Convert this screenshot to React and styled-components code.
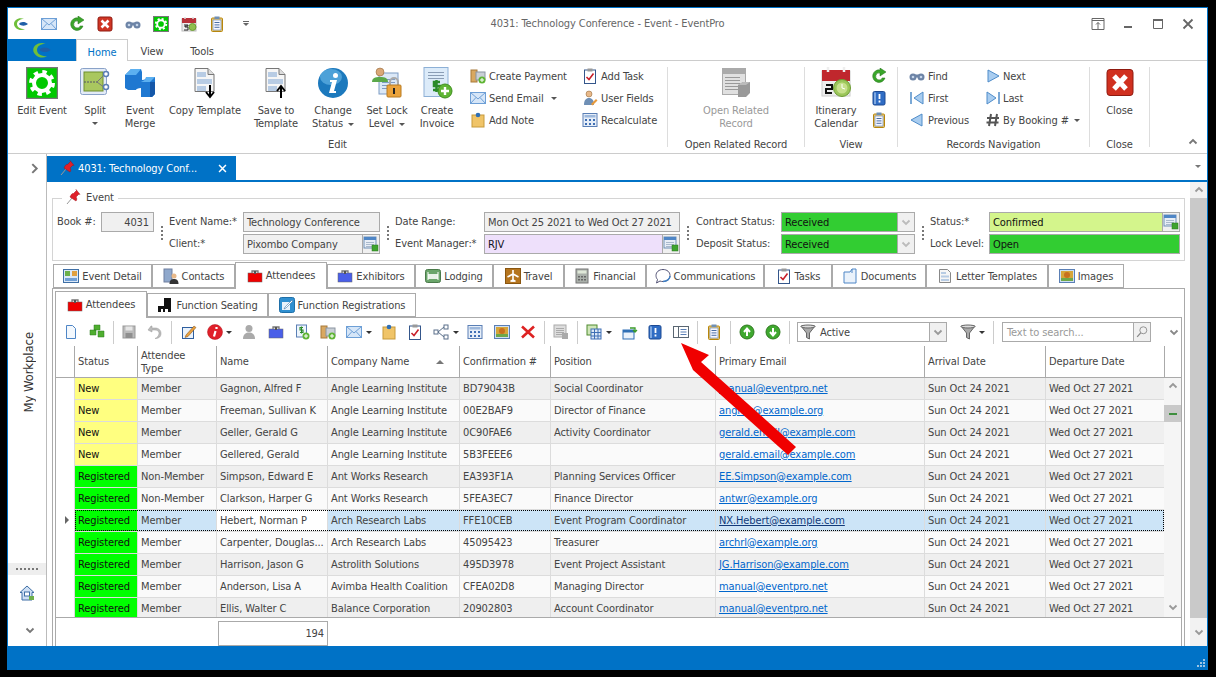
import React from 'react';
import styled, { createGlobalStyle } from 'styled-components';

const Global = createGlobalStyle`
  html, body { margin: 0; padding: 0; background: #000; overflow: hidden; }
  body { font-family: "DejaVu Sans Condensed", "DejaVu Sans", "Liberation Sans", sans-serif; font-stretch: condensed; font-size: 11px; letter-spacing: -0.1px; color: #444; }
  * { box-sizing: border-box; }
`;

const BLUE = '#0072c6';
const Page = styled.div`position: relative; width: 1216px; height: 677px; padding: 7px 8px 7px 7px; background: #000;`;
const Win = styled.div`width: 1201px; height: 663px; background: #fff; border: 1px solid ${BLUE}; display: flex; flex-direction: column;`;
const Svg = styled.svg`display: block; flex: none;`;
const Overlay = styled.svg`position: absolute; left: 0; top: 0; pointer-events: none;`;

const TitleBar = styled.div`height: 31px; flex: none; display: grid; grid-template-columns: 1fr auto 1fr; align-items: center;`;
const Qat = styled.div`display: flex; align-items: center; gap: 12px; padding-left: 5px;`;
const Title = styled.div`color: #666;`;
const WinBtns = styled.div`display: flex; justify-content: flex-end; align-items: center; gap: 16px; padding-right: 12px;`;
const QatCaret = styled.span`margin-left: 6px; display: flex; flex-direction: column; gap: 1px; align-items: center;
  &::before { content: ''; width: 6px; height: 1px; background: #666; }
  &::after { content: ''; border: 3px solid transparent; border-top-color: #666; border-bottom: 0; }`;

const RTabs = styled.div`height: 22px; flex: none; display: flex; border-bottom: 1px solid #ccc;`;
const LogoTab = styled.div`width: 68px; height: 22px; background: ${BLUE}; display: flex; align-items: center; justify-content: center;`;
const RTab = styled.div`height: ${p => p.$on ? 22 : 21}px; width: ${p => p.$w}px; display: flex; align-items: center; justify-content: center; font-size: 11px; padding-top: 3px;
  color: ${p => p.$on ? BLUE : '#444'}; ${p => p.$on && 'background:#fff; border: 1px solid #ccc; border-bottom: 0;'}`;

const Ribbon = styled.div`height: 93px; flex: none; display: flex; padding: 6px 0 0; border-bottom: 1px solid #ccc;`;
const RGroup = styled.div`width: ${p => p.$w}px; height: 80px; flex: none; display: flex; flex-direction: column; border-right: ${p => p.$noline ? 0 : '1px solid #ddd'};`;
const RContent = styled.div`height: 70px; flex: none; display: flex; padding-left: ${p => p.$pl || 0}px;`;
const RLabel = styled.div`height: 10px; line-height: 16px; text-align: center; color: #444; white-space: nowrap;`;
const Big = styled.div`width: ${p => p.$w}px; flex: none; display: flex; flex-direction: column; align-items: center; color: ${p => p.$off ? '#999' : '#444'}; line-height: 13px; text-align: center;`;
const BigIcon = styled.div`height: 37px; flex: none;`;
const BigText = styled.div`white-space: nowrap;`;
const SmallCol = styled.div`width: ${p => p.$w ? p.$w + 'px' : 'auto'}; flex: none; margin-top: -2px; margin-left: ${p => p.$ml || 0}px; display: flex; flex-direction: column;`;
const SmallRow = styled.div`height: 22px; display: flex; align-items: center; gap: ${p => p.$gap ?? 3}px; white-space: nowrap;`;
const Caret = styled.span`display: inline-block; flex: none; width: 0; height: 0; border: 3px solid transparent; border-top: 3px solid ${p => p.$c || '#555'}; border-bottom: 0; margin-left: ${p => p.$ml || 0}px; vertical-align: middle;`;
const CaretLine = styled.div`height: 13px; display: flex; align-items: center; justify-content: center;`;
const Collapse = styled.div`margin-left: auto; align-self: flex-end; padding: 0 9px 6px 0;`;

const Body = styled.div`flex: 1; min-height: 0; display: flex;`;
const Side = styled.div`width: 39px; flex: none; border-right: 1px solid #bbb; display: flex; flex-direction: column;`;
const SideTop = styled.div`height: 28px; flex: none; display: flex; align-items: center; justify-content: flex-end; padding-right: 6px;`;
const SideMid = styled.div`flex: 1; min-height: 0; display: flex; align-items: center; justify-content: center;`;
const Vertical = styled.div`writing-mode: vertical-rl; transform: rotate(180deg); font-size: 13px; color: #333; margin-left: 2px;`;
const Splitter = styled.div`height: 12px; flex: none; background: #eee; display: flex; align-items: center; justify-content: center;
  &::after { content: ''; width: 22px; height: 2px; background: repeating-linear-gradient(90deg, #777 0 2px, transparent 2px 4px); }`;
const SideHome = styled.div`height: 36px; flex: none; display: flex; align-items: center; justify-content: center;`;
const SideEnd = styled.div`height: 35px; flex: none; display: flex; align-items: flex-start; justify-content: center; padding-top: 14px; padding-left: 5px;`;

const Doc = styled.div`flex: 1; min-width: 0; display: flex; flex-direction: column;`;
const DocTabs = styled.div`height: 28px; flex: none; border-bottom: 2px solid ${BLUE}; display: flex; align-items: flex-end; justify-content: space-between;`;
const DocTab = styled.div`width: 189px; height: 24px; background: ${BLUE}; color: #fff; display: flex; align-items: center; padding: 0 8px 0 13px; gap: 2px;`;
const DocTabText = styled.span`flex: 1; white-space: nowrap;`;
const DocMenu = styled.div`padding: 0 6px 8px 0;`;
const DocBody = styled.div`flex: 1; min-height: 0; display: flex;`;
const Main = styled.div`flex: 1; min-width: 0; padding: 16px 5px 0; display: flex; flex-direction: column;`;
const VScroll = styled.div`width: 17px; flex: none; display: flex; flex-direction: column; background: #f2f2f2;`;
const ScrollBtn = styled.div`height: ${p => p.$h}px; flex: none; display: flex; align-items: center; justify-content: center;`;
const ScrollTrack = styled.div`flex: 1; background: #c9c9c9;`;

const EventBox = styled.div`height: 63px; flex: none; border: 1px solid #d4d4d4;`;
const Legend = styled.div`width: fit-content; margin: -11px 0 0 9px; padding: 0 4px; height: 18px; display: flex; align-items: center; gap: 4px; background: #fff; font-size: 11px;`;
const Form = styled.div`margin: 6px 0 0 4px; display: grid; grid-auto-flow: column; grid-template-rows: 20px 20px; row-gap: 2px;
  grid-template-columns: 44px 53px 15px 74px 137px 15px 89px 196px 16px 85px 134px 15px 59px 191px;`;
const FLabel = styled.div`line-height: 20px; white-space: nowrap; color: #444;`;
const Empty = styled.div``;
const Field = styled.div`height: 20px; border: 1px solid #aaa; background: ${p => p.$bg || '#f0f0f0'}; color: ${p => p.$c || '#444'}; display: flex; align-items: center; justify-content: ${p => p.$right ? 'flex-end' : 'space-between'}; padding-left: 3px; padding-right: ${p => p.$right ? 4 : 0}px; white-space: nowrap; overflow: hidden;`;
const FieldBtn = styled.div`width: 17px; height: 18px; flex: none; background: #f0f0f0; border-left: 1px solid #aaa; display: flex; align-items: center; justify-content: center;`;
const GripCell = styled.div`grid-row: 1 / span 2; display: flex; align-items: center; justify-content: flex-start; padding-left: 7px;
  &::after { content: ''; width: 2px; height: 14px; background: repeating-linear-gradient(180deg, #777 0 2px, transparent 2px 4px); }`;

const TabRow = styled.div`height: 26px; flex: none; margin-top: ${p => p.$mt || 0}px; padding-left: ${p => p.$pl || 0}px; display: flex; align-items: flex-end; position: relative; z-index: 1;`;
const Tab = styled.div`width: ${p => p.$w}px; height: ${p => p.$on ? 27 : p.$h}px; flex: none; margin-bottom: ${p => p.$on ? -1 : 0}px; background: #fff; border: 1px solid #aaa; border-bottom: ${p => p.$on ? 0 : '1px solid #aaa'}; display: flex; align-items: center; justify-content: center; gap: 3px; padding-bottom: ${p => p.$on ? 1 : 0}px; white-space: nowrap; color: #444;`;
const Panel = styled.div`flex: 1; min-height: 0; border: 1px solid #aaa; border-bottom: 0; padding: 2px 2px 0; display: flex; flex-direction: column;`;
const Inner = styled.div`flex: 1; min-height: 0; border: 1px solid #aaa; border-bottom: 0; display: flex; flex-direction: column;`;

const Toolbar = styled.div`height: 28px; flex: none; display: flex; align-items: center; padding-left: 2px;`;
const Tool = styled.div`width: ${p => p.$w}px; margin-left: ${p => p.$ml || 0}px; height: 24px; flex: none; display: flex; align-items: center; justify-content: center; gap: 3px;`;
const TSep = styled.div`width: ${p => p.$w || 6}px; height: 23px; flex: none; display: flex; justify-content: center; &::after { content: ''; width: 1px; background: #ccc; }`;
const Combo = styled.div`width: 150px; height: 20px; margin-left: 5px; flex: none; border: 1px solid #aaa; display: flex; align-items: center; padding-left: 2px; gap: 4px;`;
const ComboText = styled.span`flex: 1;`;
const ComboBtn = styled.div`width: 17px; height: 18px; background: #f0f0f0; border-left: 1px solid #aaa; display: flex; align-items: center; justify-content: center;`;
const Search = styled.div`width: 149px; height: 20px; margin-left: 6px; flex: none; border: 1px solid #aaa; display: flex; align-items: center; padding-left: 4px; color: #999;`;
const ToolEnd = styled.div`margin-left: auto; padding-right: 2px;`;

const COLS = '18px 63px 79px 111px 132px 91px 165px 209px 121px 119px';
const Head = styled.div`height: 32px; flex: none; display: grid; grid-template-columns: ${COLS} 1fr; border-bottom: 1px solid #aaa;`;
const HCell = styled.div`border-left: ${p => p.$first ? 0 : '1px solid #aaa'}; padding: 0 3px; display: flex; align-items: center; justify-content: space-between; line-height: 13px; color: #444; position: relative;`;
const SortUp = styled.span`border: 4px solid transparent; border-bottom: 4px solid #777; border-top: 0; margin-right: 12px;`;
const GridBody = styled.div`height: 239px; flex: none; display: flex; overflow: hidden;`;
const Rows = styled.div`width: 1108px; flex: none;`;
const Row = styled.div`position: relative; height: 22px; display: grid; grid-template-columns: ${COLS};
  ${p => p.$sel && `&::after { content: ''; position: absolute; left: 19px; right: 0; top: 0; bottom: 1px; border: 1px dotted #000; pointer-events: none; }`}`;
const Cell = styled.div`background: ${p => p.$bg}; color: ${p => p.$c || '#444'}; border-left: 1px solid #dcdcdc; border-bottom: 1px solid #dcdcdc; padding: 0 3px; display: flex; align-items: center; white-space: nowrap; overflow: hidden; padding-bottom: 1px;`;
const Indicator = styled.div`background: #fff; display: flex; align-items: center; justify-content: flex-end; padding: 0 5px 2px 0;
  ${p => p.$on && `&::after { content: ''; border: 4px solid transparent; border-left: 4px solid #666; border-right: 0; }`}`;
const Mail = styled.span`color: ${p => p.$dark ? '#123a7a' : '#0066cc'}; text-decoration: underline;`;
const GridScroll = styled.div`flex: 1; background: #f5f5f5; display: flex; flex-direction: column;`;
const GsUp = styled.div`height: 27px; flex: none; display: flex; align-items: center; justify-content: center; padding-bottom: 12px;`;
const GsThumb = styled.div`height: 17px; flex: none; background: #c9c9c9; display: flex; align-items: center; justify-content: center; &::after { content: ''; width: 8px; height: 2px; background: #3f8f3f; }`;
const GsDown = styled.div`margin-top: auto; height: 20px; display: flex; align-items: center; justify-content: center;`;
const Foot = styled.div`flex: 1; border-top: 1px solid #aaa; padding: 3px 0 0 162px;`;
const Total = styled.div`width: 110px; height: 25px; border: 1px solid #aaa; display: flex; align-items: center; justify-content: flex-end; padding-right: 3px; color: #444;`;
const Status = styled.div`height: 23px; flex: none; background: ${BLUE}; display: flex; align-items: flex-end; justify-content: flex-end; padding: 0 1px 1px 0;`;

const Chev = ({ d = 'down', c = '#888', s = 10 }) => {
  const p = { down: 'M1.5 3.5L5 7l3.5-3.5', up: 'M1.5 6.5L5 3l3.5 3.5', right: 'M3 1L7 5l-4 4' }[d];
  return <Svg width={s} height={s} viewBox="0 0 10 10"><path d={p} fill="none" stroke={c} strokeWidth="1.8" /></Svg>;
};

const gear = (cx, cy, r) => (
  <g fill="none" stroke="#fff">
    <circle cx={cx} cy={cy} r={r * 1.37} strokeWidth={r * 0.5} strokeDasharray={`${r * 0.54} ${r * 0.536}`} />
    <circle cx={cx} cy={cy} r={r} strokeWidth={r * 0.5} />
  </g>
);
const lines = (x, y, w, n, c = '#8a9db5', st = 2) => Array.from({ length: n }, (_, i) => <path key={i} d={`M${x} ${y + i * st + .5}h${w}`} stroke={c} strokeWidth="1" />);
const brief = c => (<g><rect x="1" y="5" width="14" height="9" fill={c} stroke="#666" strokeWidth=".5" /><path d="M5 5V3h6v2" fill="none" stroke="#777" strokeWidth="1.3" /><rect x="7" y="3" width="2" height="3" fill="#555" /></g>);
const note = (<g><rect x="2" y="3" width="12" height="12" fill="#f0c468" stroke="#c79a3a" /><circle cx="8" cy="3" r="2.3" fill="#2f6fb5" /></g>);
const task = (<g><rect x="2.5" y="2" width="11" height="13.5" fill="#fff" stroke="#34568b" /><rect x="5.5" y="0.5" width="5" height="3" fill="#999" /><path d="M4.5 9l2.5 2.5 4.5-6" fill="none" stroke="#c8202a" strokeWidth="1.6" /></g>);
const clip = (<g><rect x="2.5" y="2" width="11" height="13.5" rx="1" fill="#e9c877" stroke="#b8860b" /><rect x="4" y="4" width="8" height="10" fill="#f7f7ff" stroke="#5a7fb0" strokeWidth=".6" />{lines(5.5, 6, 5, 3, '#4a6fa5', 2.4)}<rect x="5.5" y=".5" width="5" height="2.5" fill="#6f8fb5" /></g>);
const book = (<g><rect x="2" y="1.5" width="12" height="13.5" rx="1.5" fill="#2f6cc4" stroke="#1d4a94" /><rect x="3" y="2.5" width="2" height="11.5" fill="#7fa8e0" /><path d="M8.5 4v5M8.5 10.5v2" stroke="#fff" strokeWidth="1.8" /></g>);
const tri = (pts, f = '#a9cdf0') => <path d={pts} fill={f} stroke="#4f8cc9" strokeLinejoin="round" />;
const lookup = (<g><rect x="1" y="1" width="12" height="11" fill="#e8eef6" stroke="#6f8fb5" /><rect x="1" y="1" width="12" height="3" fill="#4f86c6" />{lines(3, 6, 8, 3, '#a9b9cc', 2)}<rect x="9" y="9" width="6" height="6" fill="#3fa32f" stroke="#2a7a1f" strokeWidth=".5" /></g>);
const updown = (c, up) => (<g><circle cx="8" cy="8" r="7" fill={c} stroke="#2f7a1f" /><path d={up ? 'M8 12V6M5 8l3-3.5L11 8' : 'M8 4v6M5 8l3 3.5L11 8'} fill="none" stroke="#fff" strokeWidth="2" /></g>);

const I = {
  logo: <g><path d="M1 8C1 4 6 1 11 3 7 3 4 5 4 8s3 5 8 5C7 16 1 12 1 8z" fill="#6fbf3a" /><path d="M6 8c1-2.5 6-3 9 0-3 2.500-7 2-9 0z" fill="#1f5fa8" /></g>,
  mail: <g><rect x=".5" y="2.500" width="15" height="11" fill="#d6e6f8" stroke="#6d9fd6" /><path d="M.5 2.500L8 9l7.500-6.500M.5 13.500L6 7.500m9.500 6L10 7.500" fill="none" stroke="#6d9fd6" /></g>,
  refresh: <path d="M14 10A6.300 6.300 0 1 1 9 1.900V0l6 4-6 4V5A3.500 3.500 0 1 0 11.300 10z" fill="#3aa62a" stroke="#1f6d14" strokeWidth=".5" />,
  redx: <g><rect x="1" y="1" width="14" height="14" rx="2" fill="#cf3524" stroke="#8f1a10" /><path d="M4.500 4.500l7 7m0-7l-7 7" stroke="#fff" strokeWidth="2.600" /></g>,
  binoc: <g fill="#6d84a6"><circle cx="4" cy="9" r="3.500" /><circle cx="12" cy="9" r="3.500" /><rect x="6" y="6.500" width="4" height="3" /><circle cx="4" cy="9" r="1.300" fill="#c5d5ea" /><circle cx="12" cy="9" r="1.300" fill="#c5d5ea" /></g>,
  gear: <g><rect x=".5" y=".5" width="15" height="15" fill="#00c800" stroke="#777" />{gear(8, 8, 3.800)}</g>,
  cal: <g><rect x="1" y="3" width="14" height="12" fill="#eee" stroke="#bbb" /><rect x="1" y="2" width="14" height="5" fill="#b8323a" /><path d="M4 1v2m8-2v2" stroke="#ddd" strokeWidth="1.500" /><path d="M3 9h4v1H4v1h3v3H3" fill="none" stroke="#222" strokeWidth="1" /><circle cx="11.500" cy="11" r="3.500" fill="#8fbf4f" stroke="#6d9d33" /></g>,
  clip,
  payment: <g><rect x="1" y="2" width="6" height="12" fill="#d9a860" stroke="#a87a3a" /><rect x="6" y="4" width="9" height="8" fill="#c9cfd6" stroke="#8a94a0" /><circle cx="12" cy="12" r="3.500" fill="#5fb534" /><path d="M12 10v4m-2-2h4" stroke="#fff" /></g>,
  note, task,
  user: <g><circle cx="7" cy="4" r="3" fill="#e8b98a" stroke="#8a5a2a" strokeWidth=".5" /><path d="M2 15c0-5 2-7 5-7s5 2 5 7z" fill="#6f8fb5" /><path d="M9 14l5-5 1.500 1.500-5 5z" fill="#e89a3c" /></g>,
  calc: <g><rect x="1" y="1.500" width="14" height="13" fill="#e6eef8" stroke="#5a7fb5" /><rect x="2.500" y="3" width="11" height="2.500" fill="#9db8dc" /><path d="M3 7h2v2H3zM7 7h2v2H7zM11 7h2v2h-2zM3 11h2v2H3zM7 11h2v2H7zM11 11h2v2h-2z" fill="#3f6fb5" /></g>,
  next: tri('M3 2l11 6-11 6z'),
  prev: tri('M13 2L2 8l11 6z'),
  first: <g><path d="M2 2v12" stroke="#4f8cc9" strokeWidth="1.500" />{tri('M14 2L5 8l9 6z')}</g>,
  last: <g><path d="M14 2v12" stroke="#4f8cc9" strokeWidth="1.500" />{tri('M2 2l9 6-9 6z')}</g>,
  hash: <path d="M6 2L4 14M12 2l-2 12M2 6h12M1.500 10.500h12" stroke="#555" strokeWidth="2" fill="none" />,
  book,
  lookup,
  pin: <g><path d="M1 15l5-6" stroke="#999" strokeWidth="1" /><path d="M4 8l6 4c1-1 1-3 0-4l3-3 1 .5L10 .5l.5 1-3 3C6 4 5 6 4 8z" fill="#e0202a" stroke="#a01018" strokeWidth=".5" /></g>,
  x: <path d="M3 3l10 10m0-10L3 13" stroke="#fff" strokeWidth="2.200" />,
  detail: <g><rect x=".5" y="1.500" width="15" height="13" fill="#dbe8f7" stroke="#3f6fa5" /><rect x="2" y="3" width="5" height="5" fill="#6cb04a" /><rect x="9" y="3" width="5" height="5" fill="#e0a040" /><rect x="2" y="10" width="12" height="3" fill="#6f9fd6" /></g>,
  contacts: <g><rect x="1" y="1" width="8" height="13" fill="#8fa8cc" stroke="#6f7f9f" /><circle cx="11" cy="8" r="2.500" fill="#e8b98a" /><path d="M6.500 16c0-4 2-5 4.500-5s4.500 1 4.500 5z" fill="#333" /></g>,
  red: brief('#f00000'),
  blue: brief('#4a5fe8'),
  lodging: <g><rect x=".5" y="1.500" width="15" height="13" rx="2" fill="#6aa56a" stroke="#4a7a4a" /><rect x="3" y="6" width="10" height="5" fill="#e8f2e8" /><path d="M3 4v8m10-8v8" stroke="#fff" /></g>,
  travel: <g><rect x=".5" y=".5" width="15" height="15" fill="#b5751f" stroke="#8a5610" /><path d="M8 2v12M2.500 9L8 6l5.500 3M5.500 13.500L8 12l2.500 1.500" fill="none" stroke="#fff" strokeWidth="1.600" /></g>,
  fin: <g><rect x="2" y="1" width="12" height="14" fill="#aab0aa" stroke="#777" /><rect x="3.500" y="2.500" width="9" height="3" fill="#dfe8d8" /><path d="M4 8h2v1.500H4zM7 8h2v1.500H7zM10 8h2v1.500h-2zM4 11h2v1.500H4zM7 11h2v1.500H7zM10 11h2v1.500h-2z" fill="#666" /></g>,
  comm: <g><path d="M8 1.500c4 0 7 2.500 7 6s-3 6-7 6c-1 0-2 0-3-.5L1.500 15l1-3.500C1.500 10.500 1 9 1 7.500c0-3.500 3-6 7-6z" fill="#fff" stroke="#557" /><path d="M15 8c0 3-3 5.500-7 5.500" fill="none" stroke="#3f7fc4" strokeWidth="1.500" /></g>,
  docs: <g><path d="M2 4h6l2-3h4v14H2z" fill="#eaf2fb" stroke="#4f86c6" /><path d="M10 1v4" stroke="#4f86c6" /></g>,
  letter: <g><path d="M2.500 1.500h8l3 3v10h-11z" fill="#f6f6f6" stroke="#888" /><path d="M4 4h5v2H4zM4 7.500h8v2H4zM4 11h8v2H4z" fill="#b8cce4" /></g>,
  image: <g><rect x=".5" y="1.500" width="15" height="13" fill="#cfe0f5" stroke="#5a7fb5" /><rect x="2" y="3" width="12" height="10" fill="#d6a63a" /><circle cx="8" cy="7" r="3" fill="#c8701f" /><rect x="2" y="10" width="12" height="3" fill="#6fa84a" /></g>,
  seat: <g fill="#111"><rect x="7" y="1" width="7" height="8" /><rect x="1" y="9" width="13" height="3" /><rect x="1" y="9" width="3" height="6" /><rect x="11" y="9" width="3" height="6" /><rect x="6" y="11" width="2" height="4" /></g>,
  reg: <g><rect x=".5" y=".5" width="15" height="15" rx="2" fill="#2f8fd0" stroke="#1f6fa8" /><path d="M3 13V5h8v8z" fill="#e8f2fb" /><path d="M6 10l7-7 1 1-7 7-2 1z" fill="#fff" stroke="#1f5f98" strokeWidth=".5" /></g>,
  newdoc: <path d="M3.500 1.500h6l3 3v10h-9z" fill="#f3f8fd" stroke="#4f86c6" />,
  cubes: <g fill="#4fae2f" stroke="#2a7a1f" strokeWidth=".5"><path d="M5 1h6v5H5zM1 6h6v5H1zM9 7h6v6H9z" /></g>,
  save: <g><rect x="2" y="2" width="12" height="12" fill="#bbb" stroke="#999" /><rect x="4.500" y="2.500" width="7" height="4" fill="#e6e6e6" /><rect x="4.500" y="9" width="7" height="5" fill="#8f8f8f" /></g>,
  undo: <path d="M4 2L1 6l4 2V6h3c3 0 4 1.500 4 3.500S10 14 8 14.500c4 0 6-2 6-5S12 4 8 4H5V2z" fill="#bbb" stroke="#999" strokeWidth=".5" />,
  edit: <g><rect x="1.500" y="3.500" width="11" height="11" fill="#eaf2fb" stroke="#2f5f9f" /><path d="M5 11l8-9 2 1.500-8 9-3 1z" fill="#e8a040" stroke="#7a4a10" strokeWidth=".5" /></g>,
  info: <g><circle cx="8" cy="8" r="7.500" fill="#e0202a" stroke="#b01018" strokeWidth=".5" /><path d="M9.500 3v2M8.500 7l-1.500 5.500" stroke="#fff" strokeWidth="2.200" /></g>,
  person: <g fill="#aaa"><circle cx="8" cy="4.500" r="3.500" /><path d="M2 15c0-5 3-6.500 6-6.500s6 1.500 6 6.500z" /></g>,
  invoice: <g><rect x="2.500" y="1" width="10" height="12" fill="#eef5fc" stroke="#5a7fb5" /><path d="M9 3.500H6v2.500h3v2.500H6M7.500 2.500v7" fill="none" stroke="#2a8a2a" strokeWidth="1.100" /><circle cx="12" cy="12" r="3.500" fill="#5fb534" /><path d="M12 10v4m-2-2h4" stroke="#fff" /></g>,
  diagram: <g fill="#fff" stroke="#5a6f8a"><rect x="1" y="6" width="4" height="4" /><rect x="11" y="1" width="4" height="4" /><rect x="11" y="11" width="4" height="4" /><path d="M5 8l6-5M5 8l6 5" fill="none" /></g>,
  redX: <path d="M2 2.500l12 11m0-11l-12 11" stroke="#d22" strokeWidth="2.600" />,
  record: <g><rect x="1" y="1" width="12" height="12" fill="#ddd" stroke="#aaa" />{lines(3, 4, 8, 4, '#aaa', 2)}<rect x="9" y="9" width="6" height="6" fill="#aaa" /></g>,
  cols: <g><rect x="1" y="1" width="10" height="10" fill="#cfe6b8" stroke="#4f8a2f" /><rect x="5" y="5" width="10" height="10" fill="#dbe8f7" stroke="#3f6fb5" /><path d="M5 8.500h10M5 12h10M8.500 5v10M12 5v10" stroke="#3f6fb5" /></g>,
  restore: <g><rect x="1" y="6" width="11" height="9" fill="#eaf2fb" stroke="#2f6fb5" /><rect x="1" y="6" width="11" height="2.500" fill="#2f6fb5" /><path d="M8 4h5v4m-2-2l2 2 2-2" fill="none" stroke="#3a9a2a" strokeWidth="1.300" /></g>,
  panel: <g fill="none" stroke="#5a6672"><rect x=".5" y="2.500" width="15" height="11" fill="#fff" /><path d="M5.500 2.500v11" /><path d="M7.500 5.500h6M7.500 8h6M7.500 10.500h6" stroke="#5a7fb5" /></g>,
  up: updown('#3fa82f', true),
  dn: updown('#3fa82f', false),
  funnel: <g><path d="M1 2h14L9.500 9v6l-3-1.500V9z" fill="#aaa" stroke="#666" /><ellipse cx="8" cy="2.500" rx="7" ry="1.500" fill="#ddd" stroke="#666" /></g>,
  lens: <g fill="none" stroke="#888"><circle cx="9.500" cy="6" r="4" /><path d="M6.500 9l-4 4.500" strokeWidth="1.500" /></g>,
  home: <g><path d="M8 1L1 7.500h2V15h10V7.500h2z" fill="#cfe0f5" stroke="#3f6fa5" /><rect x="5.500" y="7" width="5" height="4" fill="#fff" stroke="#3f6fa5" /><rect x="10" y="11" width="5" height="4" fill="#6fb04a" /></g>,
};
const Ic = ({ n, s = 16, w }) => <Svg width={w || s} height={s} viewBox="0 0 16 16">{I[n]}</Svg>;

const B = {
  gear: <g><rect x=".5" y=".5" width="31" height="31" fill="#00c800" stroke="#777" strokeWidth="1.500" />{gear(16, 16, 8)}</g>,
  split: <g><rect x="1.500" y="1.500" width="26" height="26" rx="2" fill="#e3ebf7" stroke="#8aa2c8" /><rect x="5" y="5" width="19" height="19" fill="#a9c75f" stroke="#6f8f2e" /><path d="M5 15h14" stroke="#556" strokeDasharray="2 1" /><path d="M18 15l8-8M18 15l8 6" stroke="#777" /><circle cx="27" cy="7" r="2.500" fill="#fff" stroke="#5b7fb5" strokeWidth="1.500" /><circle cx="27" cy="20" r="2.500" fill="#fff" stroke="#5b7fb5" strokeWidth="1.500" /></g>,
  merge: <g><path d="M1 8L7 2h10l1 3v8c3 0 4-1 4-3h9v17l-3 3H17v-2-7c-3 0-5 1-5 2H4l-3-2z" fill="#1f78d1" /><path d="M1 8L7 2h10l-5 6zM17 15c2-1 5-2 5-5h9l-5 5z" fill="#5cb0f0" /><path d="M26 15h5v12l-3 3h-2z" fill="#1557a8" /></g>,
  copyT: <g><path d="M6 1.500h13l6 6v17H6z" fill="#f6f6f6" stroke="#777" /><path d="M19 1.500v6h6" fill="#ddd" stroke="#777" /><path d="M8 5h9v5H8zM8 12h15v5H8zM8 19h9v5H8z" fill="#b8cce4" /><path d="M21 18v11M17 25l4 5 4-5" fill="none" stroke="#000" strokeWidth="2" /></g>,
  saveT: <g><path d="M6 1.500h13l6 6v17H6z" fill="#f6f6f6" stroke="#777" /><path d="M19 1.500v6h6" fill="#ddd" stroke="#777" /><path d="M8 5h9v5H8zM8 12h15v5H8zM8 19h9v5H8z" fill="#b8cce4" /><path d="M21 31V19M17 24l4-5 4 5" fill="none" stroke="#000" strokeWidth="2" /></g>,
  status: <g><circle cx="16" cy="16" r="15" fill="#1c79bd" /><ellipse cx="14" cy="10" rx="11" ry="8" fill="#63b2e4" opacity=".7" /><path d="M18.500 6a2.500 2.500 0 1 1 0 5 2.500 2.500 0 0 1 0-5zM13 13h7l-3 11h2v2h-7l3-11h-2z" fill="#fff" /></g>,
  lock: <g><rect x="8" y="6" width="19" height="21" fill="#dbe8f7" stroke="#7d9bc4" />{lines(11, 12, 13, 4, '#7d9bc4', 3)}<circle cx="9" cy="5" r="4" fill="#d9a878" stroke="#8a5a2a" strokeWidth=".5" /><path d="M1 15c0-4 3-5 8-5s8 1 8 5z" fill="#5aa84a" /><path d="M19 19v-4a4 4 0 0 1 8 0v4" stroke="#aaa" strokeWidth="2" fill="none" /><rect x="16" y="18" width="14" height="12" rx="1" fill="#eba33c" stroke="#b87a20" /><rect x="22" y="21" width="2" height="6" fill="#222" /></g>,
  invoice: <g><rect x="3" y="0.500" width="24" height="29" fill="#dcebf9" stroke="#8db0d6" />{lines(7, 5, 16, 3, '#8a9db5', 3)}<path d="M19 15h-6v4h6v4h-7M15.500 13v12" fill="none" stroke="#2a8a2a" strokeWidth="2.500" /><circle cx="24" cy="24" r="7" fill="#5fb534" stroke="#3f8f1f" /><path d="M24 20v8m-4-4h8" stroke="#fff" strokeWidth="2.400" /></g>,
  record: <g><rect x="2.500" y="1.500" width="23" height="26" fill="#e0e0e0" stroke="#aaa" /><rect x="3" y="2" width="22" height="5" fill="#aaa" />{lines(5, 10, 15, 5, '#999', 3)}<path d="M18 18l5-3h7v11l-4 4h-8z" fill="#999" /><path d="M18 18l5-3h7l-4 3z" fill="#bbb" /></g>,
  calendar: <g><rect x="2" y="4" width="28" height="25" fill="#eee" stroke="#ccc" /><rect x="2" y="3" width="28" height="11" fill="#c0272d" /><path d="M8 0v5m16-5v5" stroke="#eee" strokeWidth="2.500" /><path d="M6 18h6v4H6v4h6" fill="none" stroke="#111" strokeWidth="2" /><circle cx="22" cy="21" r="8.500" fill="#9cc65a" stroke="#6d9d33" /><circle cx="22" cy="21" r="5.500" fill="#c7e08c" /><path d="M22 17v4l3 1" fill="none" stroke="#fff" /></g>,
  close: <g><rect x="3" y="2.500" width="26" height="26" rx="3" fill="#d0301f" stroke="#8f1a10" /><path d="M10 9l12 13m0-13L10 22" stroke="#fff" strokeWidth="5" /></g>,
};
const BI = ({ n }) => <Svg width="32" height="32" viewBox="0 0 32 32">{B[n]}</Svg>;

const WinPin = () => <Svg width="14" height="14" viewBox="0 0 14 14"><path d="M1 1.500h12v11H1zM1 3.500h12M7 12V5.500M5 7.500l2-2 2 2" fill="none" stroke="#666" /></Svg>;
const WinMin = () => <Svg width="14" height="14" viewBox="0 0 14 14"><path d="M3 10h8" stroke="#666" strokeWidth="2" /></Svg>;
const WinMax = () => <Svg width="14" height="14" viewBox="0 0 14 14"><path d="M2.500 2.500h9v9h-9z" fill="none" stroke="#666" /><path d="M2 3h10" stroke="#666" strokeWidth="2" /></Svg>;
const WinX = () => <Svg width="14" height="14" viewBox="0 0 14 14"><path d="M2.500 2.500l9 9m0-9l-9 9" stroke="#666" strokeWidth="1.800" /></Svg>;

const mainTabs = [
  ['Event Detail', 'detail', 99], ['Contacts', 'contacts', 83], ['Attendees', 'red', 92, true], ['Exhibitors', 'blue', 88], ['Lodging', 'lodging', 78], ['Travel', 'travel', 71], ['Financial', 'fin', 82], ['Communications', 'comm', 118], ['Tasks', 'task', 68], ['Documents', 'docs', 94], ['Letter Templates', 'letter', 122], ['Images', 'image', 76],
];
const subTabs = [['Attendees', 'red', 92, true], ['Function Seating', 'seat', 121], ['Function Registrations', 'reg', 148]];

const tools = [
  ['newdoc', 26], ['cubes', 26], 0, ['save', 26], ['undo', 26], 7, ['edit', 28], ['info', 32, 1], ['person', 28], ['blue', 26], ['invoice', 26], ['payment', 26], ['mail', 35, 1, 18], ['note', 26], ['task', 26], ['diagram', 34, 1, 18], ['calc', 26], ['image', 27], ['redX', 26], 0, ['record', 27], 0, ['cols', 37, 1, 18], ['restore', 25], ['book', 26], ['panel', 26], 0, ['clip', 27], 0, ['up', 27], ['dn', 26], 0,
];
const people = [
  ['New', 'Member', 'Gagnon, Alfred F', 'Angle Learning Institute', 'BD79043B', 'Social Coordinator', 'manual@eventpro.net'],
  ['New', 'Member', 'Freeman, Sullivan K', 'Angle Learning Institute', '00E2BAF9', 'Director of Finance', 'anglelr@example.org'],
  ['New', 'Member', 'Geller, Gerald G', 'Angle Learning Institute', '0C90FAE6', 'Activity Coordinator', 'gerald.email@example.com'],
  ['New', 'Member', 'Gellered, Gerald', 'Angle Learning Institute', '5B3FEEE6', '', 'gerald.email@example.com'],
  ['Registered', 'Non-Member', 'Simpson, Edward E', 'Ant Works Research', 'EA393F1A', 'Planning Services Officer', 'EE.Simpson@example.com'],
  ['Registered', 'Non-Member', 'Clarkson, Harper G', 'Ant Works Research', '5FEA3EC7', 'Finance Director', 'antwr@example.org'],
  ['Registered', 'Member', 'Hebert, Norman P', 'Arch Research Labs', 'FFE10CEB', 'Event Program Coordinator', 'NX.Hebert@example.com'],
  ['Registered', 'Member', 'Carpenter, Douglas...', 'Arch Research Labs', '45095423', 'Treasurer', 'archrl@example.org'],
  ['Registered', 'Member', 'Harrison, Jason G', 'Astrolith Solutions', '495D3978', 'Event Project Assistant', 'JG.Harrison@example.com'],
  ['Registered', 'Member', 'Anderson, Lisa A', 'Avimba Health Coalition', 'CFEA02D8', 'Managing Director', 'manual@eventpro.net'],
  ['Registered', 'Member', 'Ellis, Walter C', 'Balance Corporation', '20902803', 'Account Coordinator', 'manual@eventpro.net'],
];
const SEL = 6;
const GREEN = '#32cd32';

const BigBtn = ({ icon, w, off, children }) => (
  <Big $w={w} $off={off}><BigIcon><BI n={icon} /></BigIcon><BigText>{children}</BigText></Big>
);

export default function App() {
  return (
    <Page>
      <Global />
      <Win>
        <TitleBar>
          <Qat>
            {['logo', 'mail', 'refresh', 'redx', 'binoc', 'gear', 'cal', 'clip'].map(n => <Ic key={n} n={n} />)}
            <QatCaret />
          </Qat>
          <Title>4031: Technology Conference - Event - EventPro</Title>
          <WinBtns><WinPin /><WinMin /><WinMax /><WinX /></WinBtns>
        </TitleBar>
        <RTabs>
          <LogoTab><Ic n="logo" s={20} /></LogoTab>
          <RTab $on $w={52}>Home</RTab>
          <RTab $w={48}>View</RTab>
          <RTab $w={52}>Tools</RTab>
        </RTabs>
        <Ribbon>
          <RGroup $w={660}>
            <RContent $pl={4}>
              <BigBtn icon="gear" w={60}>Edit Event</BigBtn>
              <Big $w={46}><BigIcon><BI n="split" /></BigIcon><BigText>Split</BigText><CaretLine><Caret /></CaretLine></Big>
              <BigBtn icon="merge" w={44}>Event<br />Merge</BigBtn>
              <BigBtn icon="copyT" w={86}>Copy Template</BigBtn>
              <BigBtn icon="saveT" w={56}>Save to<br />Template</BigBtn>
              <BigBtn icon="status" w={58}>Change<br />Status <Caret $ml={2} /></BigBtn>
              <BigBtn icon="lock" w={50}>Set Lock<br />Level <Caret $ml={2} /></BigBtn>
              <BigBtn icon="invoice" w={50}>Create<br />Invoice</BigBtn>
              <SmallCol $w={112} $ml={8}>
                <SmallRow><Ic n="payment" />Create Payment</SmallRow>
                <SmallRow><Ic n="mail" />Send Email<Caret $ml={4} /></SmallRow>
                <SmallRow><Ic n="note" />Add Note</SmallRow>
              </SmallCol>
              <SmallCol>
                <SmallRow><Ic n="task" />Add Task</SmallRow>
                <SmallRow><Ic n="user" />User Fields</SmallRow>
                <SmallRow><Ic n="calc" />Recalculate</SmallRow>
              </SmallCol>
            </RContent>
            <RLabel>Edit</RLabel>
          </RGroup>
          <RGroup $w={137}>
            <RContent><BigBtn icon="record" w={136} off>Open Related<br />Record</BigBtn></RContent>
            <RLabel>Open Related Record</RLabel>
          </RGroup>
          <RGroup $w={93}>
            <RContent>
              <BigBtn icon="calendar" w={62}>Itinerary<br />Calendar</BigBtn>
              <SmallCol $ml={4}>
                <SmallRow><Ic n="refresh" /></SmallRow>
                <SmallRow><Ic n="book" /></SmallRow>
                <SmallRow><Ic n="clip" /></SmallRow>
              </SmallCol>
            </RContent>
            <RLabel>View</RLabel>
          </RGroup>
          <RGroup $w={192}>
            <RContent $pl={11}>
              <SmallCol $w={76}>
                <SmallRow><Ic n="binoc" />Find</SmallRow>
                <SmallRow><Ic n="first" />First</SmallRow>
                <SmallRow><Ic n="prev" />Previous</SmallRow>
              </SmallCol>
              <SmallCol>
                <SmallRow $gap={2}><Ic n="next" />Next</SmallRow>
                <SmallRow $gap={2}><Ic n="last" />Last</SmallRow>
                <SmallRow $gap={2}><Ic n="hash" />By Booking #<Caret $ml={3} /></SmallRow>
              </SmallCol>
            </RContent>
            <RLabel>Records Navigation</RLabel>
          </RGroup>
          <RGroup $w={60}>
            <RContent><BigBtn icon="close" w={59}>Close</BigBtn></RContent>
            <RLabel>Close</RLabel>
          </RGroup>
          <Collapse><Chev d="up" c="#777" /></Collapse>
        </Ribbon>
        <Body>
          <Side>
            <SideTop><Chev d="right" c="#777" s={11} /></SideTop>
            <SideMid><Vertical>My Workplace</Vertical></SideMid>
            <Splitter />
            <SideHome><Ic n="home" /></SideHome>
            <SideEnd><Chev c="#777" /></SideEnd>
          </Side>
          <Doc>
            <DocTabs>
              <DocTab><Ic n="pin" /><DocTabText>4031: Technology Conf...</DocTabText><Ic n="x" s={11} /></DocTab>
              <DocMenu><Caret $c="#777" /></DocMenu>
            </DocTabs>
            <DocBody>
              <Main>
                <EventBox>
                  <Legend><Ic n="pin" />Event</Legend>
                  <Form>
                    <FLabel>Book #:</FLabel><Empty />
                    <Field $right>4031</Field><Empty />
                    <GripCell />
                    <FLabel>Event Name:*</FLabel><FLabel>Client:*</FLabel>
                    <Field>Technology Conference</Field>
                    <Field>Pixombo Company<FieldBtn><Ic n="lookup" /></FieldBtn></Field>
                    <GripCell />
                    <FLabel>Date Range:</FLabel><FLabel>Event Manager:*</FLabel>
                    <Field>Mon Oct 25 2021 to Wed Oct 27 2021</Field>
                    <Field $bg="#eee0fb" $c="#112">RJV<FieldBtn><Ic n="lookup" /></FieldBtn></Field>
                    <GripCell />
                    <FLabel>Contract Status:</FLabel><FLabel>Deposit Status:</FLabel>
                    <Field $bg={GREEN} $c="#111">Received<FieldBtn><Chev c="#bbb" /></FieldBtn></Field>
                    <Field $bg={GREEN} $c="#111">Received<FieldBtn><Chev c="#bbb" /></FieldBtn></Field>
                    <GripCell />
                    <FLabel>Status:*</FLabel><FLabel>Lock Level:</FLabel>
                    <Field $bg="#d4f58c" $c="#111">Confirmed<FieldBtn><Ic n="lookup" /></FieldBtn></Field>
                    <Field $bg={GREEN} $c="#111">Open</Field>
                  </Form>
                </EventBox>
                <TabRow $mt={1} $pl={1}>
                  {mainTabs.map(([t, ic, w, on]) => <Tab key={t} $w={w} $on={on} $h={24}><Ic n={ic} />{t}</Tab>)}
                </TabRow>
                <Panel>
                  <TabRow>
                    {subTabs.map(([t, ic, w, on]) => <Tab key={t} $w={w} $on={on} $h={24}><Ic n={ic} />{t}</Tab>)}
                  </TabRow>
                  <Inner>
                    <Toolbar>
                      {tools.map((t, i) => {
                        if (!Array.isArray(t)) return <TSep key={i} $w={t || 6} />;
                        return <Tool key={i} $w={t[1]}><Ic n={t[0]} s={16} w={t[3]} />{t[2] && <Caret $c="#333" />}</Tool>;
                      })}
                      <Combo><Ic n="funnel" /><ComboText>Active</ComboText><ComboBtn><Chev c="#999" /></ComboBtn></Combo>
                      <Tool $w={35} $ml={8}><Ic n="funnel" /><Caret $c="#333" /></Tool>
                      <TSep />
                      <Search><ComboText>Text to search...</ComboText><ComboBtn><Ic n="lens" s={14} /></ComboBtn></Search>
                      <ToolEnd><Chev c="#888" /></ToolEnd>
                    </Toolbar>
                    <Head>
                      <HCell $first />
                      <HCell>Status</HCell>
                      <HCell><span>Attendee<br />Type</span></HCell>
                      <HCell>Name</HCell>
                      <HCell>Company Name<SortUp /></HCell>
                      <HCell>Confirmation #</HCell>
                      <HCell>Position</HCell>
                      <HCell>Primary Email</HCell>
                      <HCell>Arrival Date</HCell>
                      <HCell>Departure Date</HCell>
                      <HCell />
                    </Head>
                    <GridBody>
                      <Rows>
                        {people.map((p, i) => {
                          const sel = i === SEL;
                          const bg = sel ? '#cce4f7' : i % 2 ? '#fafafa' : '#efefef';
                          return (
                            <Row key={i} $sel={sel}>
                              <Indicator $on={sel} />
                              <Cell $bg={p[0] === 'New' ? '#ffff80' : '#00ff00'} $c="#111">{p[0]}</Cell>
                              <Cell $bg={bg}>{p[1]}</Cell>
                              <Cell $bg={sel ? '#fff' : bg}>{p[2]}</Cell>
                              <Cell $bg={bg}>{p[3]}</Cell>
                              <Cell $bg={bg}>{p[4]}</Cell>
                              <Cell $bg={bg}>{p[5]}</Cell>
                              <Cell $bg={bg}><Mail $dark={sel}>{p[6]}</Mail></Cell>
                              <Cell $bg={bg}>Sun Oct 24 2021</Cell>
                              <Cell $bg={bg}>Wed Oct 27 2021</Cell>
                            </Row>
                          );
                        })}
                      </Rows>
                      <GridScroll>
                        <GsUp><Chev d="up" c="#999" /></GsUp>
                        <GsThumb />
                        <GsDown><Chev c="#999" /></GsDown>
                      </GridScroll>
                    </GridBody>
                    <Foot><Total>194</Total></Foot>
                  </Inner>
                </Panel>
              </Main>
              <VScroll>
                <ScrollBtn $h={16}><Chev d="up" c="#999" /></ScrollBtn>
                <ScrollTrack />
                <ScrollBtn $h={28}><Chev c="#999" /></ScrollBtn>
              </VScroll>
            </DocBody>
          </Doc>
        </Body>
        <Status>
          <Svg width="10" height="10" viewBox="0 0 10 10"><path d="M7 1h2v2H7zM4 4h2v2H4zM7 4h2v2H7zM1 7h2v2H1zM4 7h2v2H4zM7 7h2v2H7z" fill="#9cc4e4" /></Svg>
        </Status>
      </Win>
      <Overlay width="1216" height="677" viewBox="0 0 1216 677">
        <path d="M681 343L709 355 701 362 796 447 788 455 693 370z" fill="#f00000" />
      </Overlay>
    </Page>
  );
}
